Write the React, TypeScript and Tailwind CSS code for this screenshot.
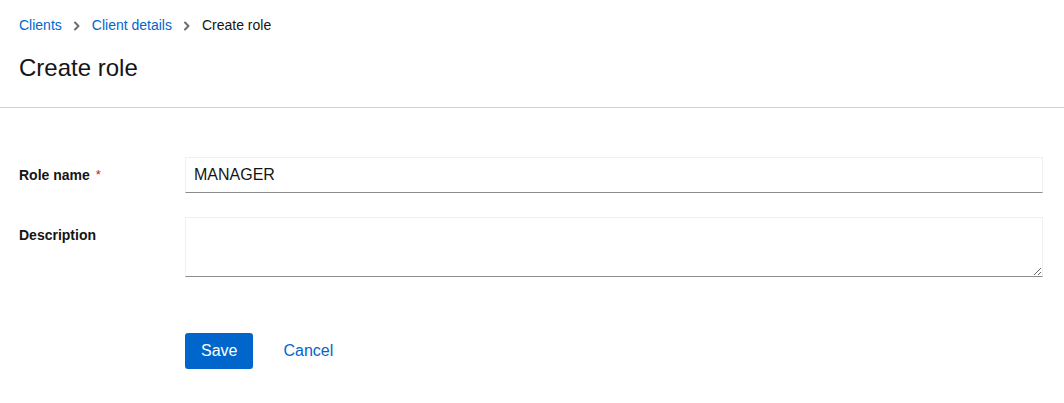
import React from "react";

export default function App() {
  return (
    <div className="min-h-[403px] w-full bg-white text-[#151515]" style={{ fontFamily: '"Liberation Sans", Arial, sans-serif' }}>
      <div className="border-b border-[#d2d2d2] pl-[19px] pr-[21px] pt-[15px] pb-[24px]">
        <nav className="flex items-center text-[14px] leading-[21px]">
          <a className="text-[#0066cc]">Clients</a>
          <svg className="mx-[11px] h-[10px] w-[8px] text-[#6a6e73]" viewBox="0 0 8 10" fill="none">
            <path d="M2 1.5 L5.5 5 L2 8.5" stroke="currentColor" strokeWidth="2" strokeLinecap="round" strokeLinejoin="round" />
          </svg>
          <a className="text-[#0066cc]">Client details</a>
          <svg className="mx-[11px] h-[10px] w-[8px] text-[#6a6e73]" viewBox="0 0 8 10" fill="none">
            <path d="M2 1.5 L5.5 5 L2 8.5" stroke="currentColor" strokeWidth="2" strokeLinecap="round" strokeLinejoin="round" />
          </svg>
          <span className="text-[#151515]">Create role</span>
        </nav>
        <h1 className="mt-[17px] text-[24px] leading-[30px] font-normal">Create role</h1>
      </div>

      <form className="pl-[19px] pr-[21px] pt-[49px]">
        <div className="grid grid-cols-[166px_1fr] items-start">
          <label className="flex h-[36px] items-center text-[14px] font-bold">
            Role name<span className="ml-[6px] text-[13px] font-normal text-[#c9190b]">*</span>
          </label>
          <input
            readOnly
            value="MANAGER"
            className="h-[36px] w-full border border-[#f0f0f0] border-b-[#8a8d90] px-[8px] text-[16px] text-[#151515] outline-none"
          />
        </div>
        <div className="mt-[24px] grid grid-cols-[166px_1fr] items-start">
          <label className="pt-[8px] text-[14px] leading-[21px] font-bold">Description</label>
          <textarea className="block h-[60px] w-full resize-y border border-[#f0f0f0] border-b-[#8a8d90] px-[8px] py-[6px] text-[16px] outline-none" />
        </div>
        <div className="mt-[56px] grid grid-cols-[166px_1fr]">
          <div />
          <div className="flex items-center gap-[14px]">
            <button type="button" className="h-[36px] rounded-[3px] bg-[#0066cc] px-[16px] text-[16px] text-white">
              Save
            </button>
            <button type="button" className="h-[36px] px-[16px] text-[16px] text-[#0066cc]">
              Cancel
            </button>
          </div>
        </div>
      </form>
    </div>
  );
}
